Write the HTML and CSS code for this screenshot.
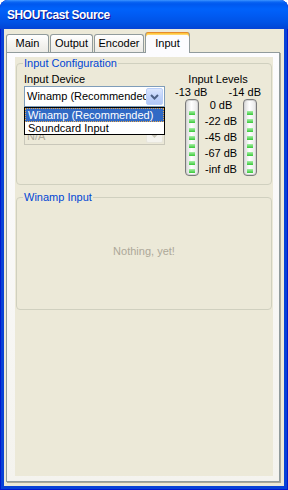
FILE: index.html
```html
<!DOCTYPE html>
<html lang="en">
<head>
    <meta charset="UTF-8" />
    <meta name="viewport" content="width=device-width, initial-scale=1.0" />
    <title>SHOUTcast Source</title>
    <link rel="stylesheet" href="styles.css">
</head>
<body>
    <div class="window">
        <div class="titlebar">SHOUTcast Source</div>

        <div class="client">
            <div class="tabs">
                <div class="tab tab-main">Main</div>
                <div class="tab tab-output">Output</div>
                <div class="tab tab-encoder">Encoder</div>
                <div class="tab tab-input active">Input</div>
            </div>

            <div class="panel">
                <div class="page">
                    <fieldset class="group group-config">
                        <legend>Input Configuration</legend>
                        <div class="config">
                            <div class="device">
                                <div class="label">Input Device</div>
                                <div class="combo-wrap">
                                    <div class="combo">
                                        <span class="combo-text">Winamp (Recommended)</span>
                                        <span class="combo-btn">
                                            <svg width="9" height="6" viewBox="0 0 9 6"><path d="M1 1 L4.5 4.5 L8 1" fill="none" stroke="#4D6185" stroke-width="2"/></svg>
                                        </span>
                                    </div>
                                    <ul class="combo-list">
                                        <li class="selected"><span>Winamp (Recommended)</span></li>
                                        <li><span>Soundcard Input</span></li>
                                    </ul>
                                </div>
                                <div class="combo disabled">
                                    <span class="combo-text">N/A</span>
                                    <span class="combo-btn">
                                        <svg width="9" height="6" viewBox="0 0 9 6"><path d="M1 1 L4.5 4.5 L8 1" fill="none" stroke="#C9C7BA" stroke-width="2"/></svg>
                                    </span>
                                </div>
                            </div>

                            <div class="levels">
                                <div class="levels-title">Input Levels</div>
                                <div class="levels-head"><span>-13 dB</span><span>-14 dB</span></div>
                                <div class="meters">
                                    <div class="meter"><i></i><i></i><i></i><i></i><i></i><i></i><i></i><i></i></div>
                                    <div class="scale">
                                        <span>0 dB</span>
                                        <span>-22 dB</span>
                                        <span>-45 dB</span>
                                        <span>-67 dB</span>
                                        <span>-inf dB</span>
                                    </div>
                                    <div class="meter"><i></i><i></i><i></i><i></i><i></i><i></i><i></i><i></i></div>
                                </div>
                            </div>
                        </div>
                    </fieldset>

                    <fieldset class="group group-winamp">
                        <legend>Winamp Input</legend>
                        <div class="empty">Nothing, yet!</div>
                    </fieldset>
                </div>
            </div>
        </div>
    </div>
</body>
</html>
```

FILE: styles.css
```css
body {
    margin: 0;
    background: #fff;
    font-family: "Liberation Sans", Arial, sans-serif;
    font-size: 11px;
    line-height: 13px;
    color: #000;
}

.window {
    width: 288px;
    height: 490px;
    display: flex;
    flex-direction: column;
    background: #0842D6;
    border-radius: 8px 8px 0 0;
    overflow: hidden;
    box-shadow: inset 1px 0 #0019CF, inset -1px 0 #0019CF, inset 0 -1px #0019CF;
}

.titlebar {
    height: 29px;
    flex: none;
    padding-left: 7px;
    line-height: 31px;
    color: #fff;
    font-size: 12px;
    font-weight: bold;
    letter-spacing: -0.4px;
    text-shadow: 1px 1px #0F1089;
    background: linear-gradient(#3D95FF 0, #0A66F4 2px, #0058EE 4px, #0062FB 9px, #005BF3 15px, #0053E6 22px, #0049D9 27px, #0842D6 29px);
}

.client {
    flex: 1;
    margin: 0 4px 4px;
    background: #ECE9D8;
    display: flex;
    flex-direction: column;
}

/* Reiter */
.tabs {
    display: flex;
    align-items: flex-end;
    padding: 3px 0 0 2px;
    height: 20px;
}
.tab {
    height: 18px;
    box-sizing: border-box;
    margin-right: 1px;
    border: 1px solid #919B9C;
    border-bottom: none;
    border-radius: 3px 3px 0 0;
    background: linear-gradient(#FFFFFF, #F3F2EE 60%, #ECEBE6);
    text-align: center;
    line-height: 16px;
}
.tab-main { width: 43px; }
.tab-output { width: 43px; }
.tab-encoder { width: 50px; }
.tab-input { width: 45px; }
.tab.active {
    height: 21px;
    margin-bottom: -1px;
    position: relative;
    z-index: 1;
    background: #FCFCFE;
    border-top: none;
    box-shadow: inset 0 1px #E68B2C, inset 0 2px #FFC73C, inset 0 3px #FFD66B;
    line-height: 18px;
    padding-top: 2px;
}

.panel {
    flex: 1;
    margin: 0 4px 4px 2px;
    border: 1px solid #919B9C;
    box-shadow: 1px 1px 0 #ACA899;
    background: linear-gradient(#FCFCFE, #F4F3EE);
    padding: 4px 6px 5px 8px;
    display: flex;
}
.page {
    flex: 1;
    background: #ECE9D8;
}

/* Gruppenrahmen */
.group {
    margin: 0 1px;
    padding: 0 7px;
    border: 1px solid #D0D0BF;
    border-radius: 4px;
    min-inline-size: 0;
}
.group legend {
    color: #0046D5;
    padding: 0 1px;
    margin-left: -1px;
    line-height: 13px;
}
.group-config {
    padding-top: 3px;
    padding-bottom: 7px;
}
.group-winamp {
    margin-top: 6px;
}

.config {
    display: flex;
}
.device {
    width: 141px;
}

.combo-wrap {
    position: relative;
}
.combo {
    height: 21px;
    box-sizing: border-box;
    border: 1px solid #7F9DB9;
    background: #fff;
    display: flex;
    align-items: center;
}
.combo-text {
    flex: 1;
    overflow: hidden;
    white-space: nowrap;
    padding-left: 2px;
}
.combo-btn {
    width: 17px;
    height: 17px;
    margin-right: 1px;
    box-sizing: border-box;
    border: 1px solid #B9CFF9;
    border-radius: 2px;
    background: linear-gradient(#DCE6FD, #C2D4FB 50%, #B1C7F7);
    display: flex;
    align-items: center;
    justify-content: center;
}
.combo.disabled {
    margin-top: 17px;
    border-color: #C9C7BA;
    background: #ECE9D8;
    color: #ACA899;
}
.combo.disabled .combo-text {
    padding-top: 3px;
}
.combo.disabled .combo-btn {
    border-color: #E8E6DC;
    background: #F4F3EE;
}

.combo-list {
    position: absolute;
    top: 100%;
    left: 0;
    right: 0;
    margin: 0;
    padding: 0;
    list-style: none;
    background: #fff;
    border: 1px solid #000;
    z-index: 2;
}
.combo-list li {
    height: 13px;
    line-height: 12px;
}
.combo-list li span {
    display: block;
    padding-left: 2px;
    border: 1px dotted transparent;
}
.combo-list li.selected span {
    background: #316AC5;
    color: #fff;
    border-color: #E8A84A;
}

/* Pegelanzeige */
.levels {
    width: 92px;
    margin-left: 7px;
}
.levels-title {
    text-align: center;
}
.levels-head {
    display: flex;
    justify-content: space-between;
    padding: 0 3px;
}
.meters {
    display: flex;
    padding-left: 13px;
}
.meter {
    width: 14px;
    height: 77px;
    box-sizing: border-box;
    border: 1px solid #7A7A7A;
    border-radius: 4px;
    background: linear-gradient(to right, #D8D8D8, #FFFFFF 45%, #E6E6E6);
    box-shadow: inset 0 0 0 1px #D4D4D4;
    display: flex;
    flex-direction: column;
    align-items: center;
    gap: 4.3px;
    padding-top: 11px;
}
.meter i {
    width: 6px;
    height: 4px;
    background: linear-gradient(#A8F0A8, #38C838);
}
.scale {
    width: 44px;
    margin-top: -2px;
    display: flex;
    flex-direction: column;
    align-items: center;
}
.scale span {
    line-height: 16px;
    white-space: nowrap;
}

.empty {
    height: 105px;
    box-sizing: border-box;
    padding-top: 41px;
    text-align: center;
    color: #ACA899;
}
```
